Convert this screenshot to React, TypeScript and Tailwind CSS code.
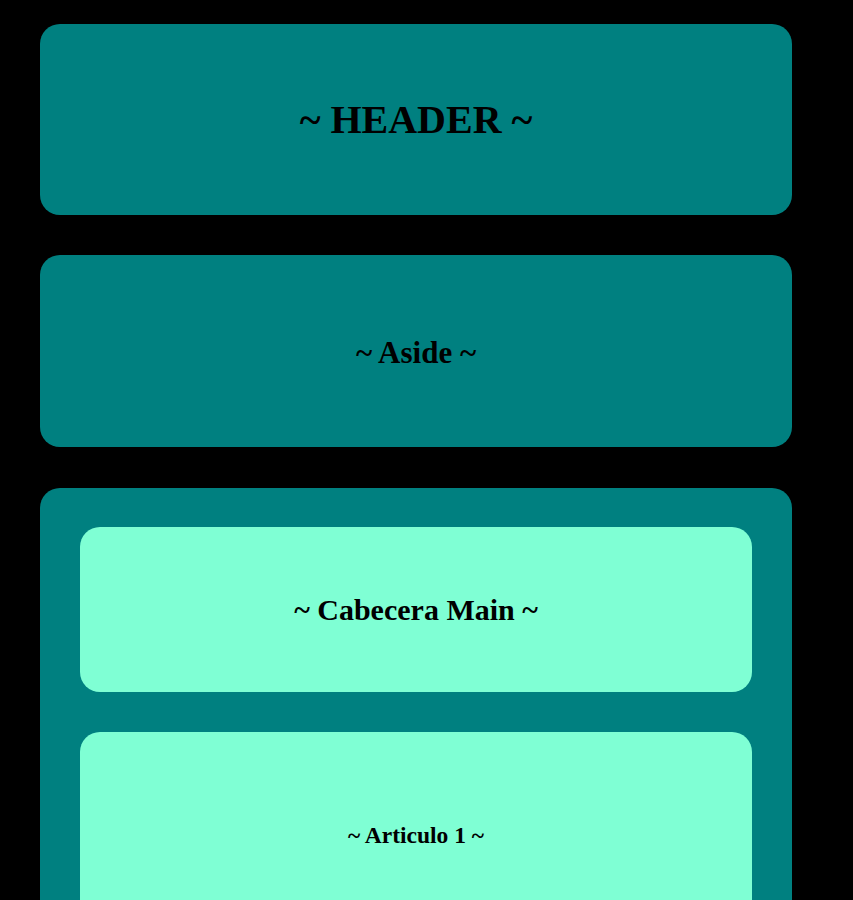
export default function App() {
  return (
    <div className="min-h-screen bg-black pt-6 pb-6 font-['Liberation_Serif',serif] font-bold text-black">
      <div className="ml-10 w-[752px]">
        {/* Header */}
        <header className="flex h-[191px] items-center justify-center rounded-[20px] bg-[#008080]">
          <h1 className="text-[40px] leading-[46px]">~ HEADER ~</h1>
        </header>

        {/* Aside */}
        <aside className="mt-10 flex h-[192px] items-center justify-center rounded-[20px] bg-[#008080] pt-[3px]">
          <h2 className="text-[31px] leading-[36px]">~ Aside ~</h2>
        </aside>

        {/* Main */}
        <main className="mt-[41px] flex flex-col gap-10 rounded-[20px] bg-[#008080] p-10 pt-[39px]">
          <div className="flex h-[165px] items-center justify-center rounded-[20px] bg-[#7fffd4]">
            <h2 className="text-[30px] leading-[35px]">~ Cabecera Main ~</h2>
          </div>
          <article className="flex h-[204px] items-center justify-center rounded-[20px] bg-[#7fffd4] pt-[2px]">
            <h3 className="text-[23.5px] leading-[27px]">~ Articulo 1 ~</h3>
          </article>
          <article className="flex h-[204px] items-center justify-center rounded-[20px] bg-[#7fffd4] pt-[2px]">
            <h3 className="text-[23.5px] leading-[27px]">~ Articulo 2 ~</h3>
          </article>
        </main>

        {/* Footer */}
        <footer className="mt-10 flex h-[191px] items-center justify-center rounded-[20px] bg-[#008080]">
          <h2 className="text-[31px] leading-[36px]">~ Footer ~</h2>
        </footer>
      </div>
    </div>
  );
}
